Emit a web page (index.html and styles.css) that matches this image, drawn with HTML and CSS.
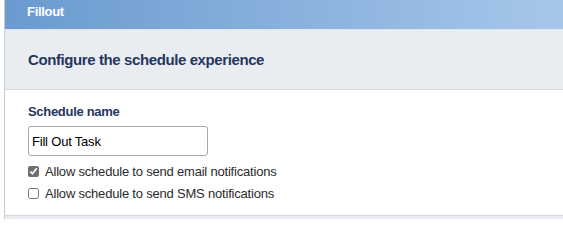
FILE: index.html
```html
<!DOCTYPE html>
<html>
<head>
<meta charset="utf-8">
<link rel="stylesheet" href="styles.css">
</head>
<body>
<div class="panel">
  <div class="panel-header">Fillout</div>
  <div class="section-head">
    <h2 class="section-title">Configure the schedule experience</h2>
  </div>
  <div class="section-body">
    <label class="field-label" for="name">Schedule name</label>
    <input class="text-input" id="name" type="text" value="Fill Out Task">
    <label class="check-row"><input type="checkbox" class="check" checked> Allow schedule to send email notifications</label>
    <label class="check-row"><input type="checkbox" class="check"> Allow schedule to send SMS notifications</label>
  </div>
  <div class="section-foot"></div>
</div>
</body>
</html>
```
FILE: styles.css
```css
html, body {
  margin: 0;
  padding: 0;
  background: #ffffff;
}
body {
  font-family: "Liberation Sans", Arial, sans-serif;
  padding-left: 4px;
}
.panel {
  border-left: 1px solid #c9cdd2;
  height: 219px;
  display: flex;
  flex-direction: column;
}
.panel-header {
  height: 29px;
  flex: none;
  box-sizing: border-box;
  background: linear-gradient(to right, #6a9acf, #a6c7ea);
  color: #ffffff;
  font-weight: bold;
  font-size: 13px;
  letter-spacing: -0.3px;
  padding: 4px 0 0 22px;
}
.section-head {
  background: #e9edf1;
  border-top: 1px solid #dfe6ee;
  border-bottom: 1px solid #d3d8dd;
  height: 61px;
  flex: none;
  box-sizing: border-box;
  display: flex;
  align-items: center;
  padding-left: 23px;
}
.section-title {
  margin: 0;
  font-size: 15px;
  font-weight: bold;
  color: #25365e;
  letter-spacing: -0.4px;
}
.section-body {
  height: 125px;
  flex: none;
  box-sizing: border-box;
  padding: 14px 0 0 23px;
  display: flex;
  flex-direction: column;
  align-items: flex-start;
}
.field-label {
  font-size: 13px;
  font-weight: bold;
  color: #25365e;
  line-height: 15px;
  letter-spacing: -0.3px;
}
.text-input {
  margin: 7px 0 4px 0;
  width: 180px;
  height: 30px;
  box-sizing: border-box;
  border: 1px solid #a9a9a9;
  border-radius: 3px;
  padding: 0 3px;
  font-family: "Liberation Sans", Arial, sans-serif;
  font-size: 13px;
  letter-spacing: -0.2px;
  color: #000000;
}
.check-row {
  display: flex;
  align-items: center;
  font-size: 13px;
  letter-spacing: -0.2px;
  color: #2b2b2b;
  height: 22px;
}
.check {
  margin: 0 6px 0 0;
  width: 11px;
  height: 11px;
  accent-color: #6f6f6f;
}
.section-foot {
  flex: 1;
  background: #e9edf1;
  border-top: 1px solid #d3d8dd;
}
```
